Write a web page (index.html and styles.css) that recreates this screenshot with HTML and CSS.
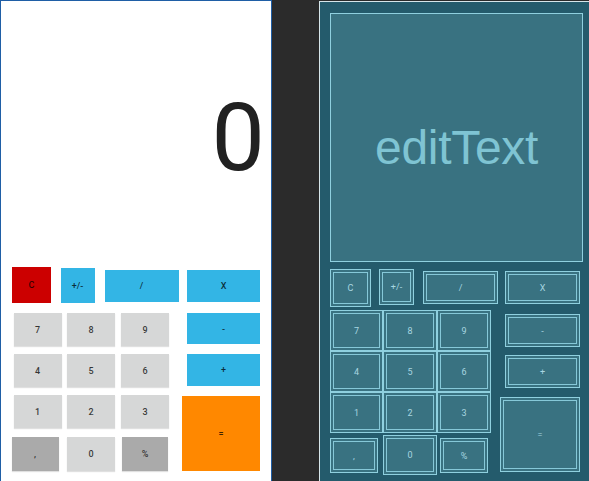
FILE: index.html
```html
<!DOCTYPE html>
<html>
<head>
<meta charset="utf-8">
<link rel="stylesheet" href="styles.css">
</head>
<body>
<div class="screen">
  <div class="panel design">
    <div class="edit"><span class="value">0</span></div>
    <div class="keypad">
      <div class="leftcol">
        <div class="row r1">
          <div class="btn b-c"><div class="face red">C</div></div>
          <div class="btn b-pm"><div class="face blue">+/-</div></div>
          <div class="btn b-div"><div class="face blue">/</div></div>
        </div>
        <div class="row digits">
          <div class="btn dg d1"><div class="face gray">7</div></div>
          <div class="btn dg"><div class="face gray">8</div></div>
          <div class="btn dg"><div class="face gray">9</div></div>
        </div>
        <div class="row digits">
          <div class="btn dg d1"><div class="face gray">4</div></div>
          <div class="btn dg"><div class="face gray">5</div></div>
          <div class="btn dg"><div class="face gray">6</div></div>
        </div>
        <div class="row digits">
          <div class="btn dg d1"><div class="face gray">1</div></div>
          <div class="btn dg"><div class="face gray">2</div></div>
          <div class="btn dg"><div class="face gray">3</div></div>
        </div>
        <div class="row r5">
          <div class="btn b-comma"><div class="face dark">,</div></div>
          <div class="btn b-zero"><div class="face gray">0</div></div>
          <div class="btn b-pct"><div class="face dark">%</div></div>
        </div>
      </div>
      <div class="rightcol">
        <div class="btn b-x"><div class="face blue">X</div></div>
        <div class="btn b-minus"><div class="face blue">-</div></div>
        <div class="btn b-plus"><div class="face blue">+</div></div>
        <div class="btn b-eq"><div class="face orange">=</div></div>
      </div>
    </div>
  </div>

  <div class="panel blueprint">
    <div class="edit"><span class="hint">editText</span></div>
    <div class="keypad">
      <div class="leftcol">
        <div class="row r1">
          <div class="btn b-c"><div class="face">C</div></div>
          <div class="btn b-pm"><div class="face">+/-</div></div>
          <div class="btn b-div"><div class="face">/</div></div>
        </div>
        <div class="row digits">
          <div class="btn dg d1"><div class="face">7</div></div>
          <div class="btn dg"><div class="face">8</div></div>
          <div class="btn dg"><div class="face">9</div></div>
        </div>
        <div class="row digits">
          <div class="btn dg d1"><div class="face">4</div></div>
          <div class="btn dg"><div class="face">5</div></div>
          <div class="btn dg"><div class="face">6</div></div>
        </div>
        <div class="row digits">
          <div class="btn dg d1"><div class="face">1</div></div>
          <div class="btn dg"><div class="face">2</div></div>
          <div class="btn dg"><div class="face">3</div></div>
        </div>
        <div class="row r5">
          <div class="btn b-comma"><div class="face">,</div></div>
          <div class="btn b-zero"><div class="face">0</div></div>
          <div class="btn b-pct"><div class="face">%</div></div>
        </div>
      </div>
      <div class="rightcol">
        <div class="btn b-x"><div class="face">X</div></div>
        <div class="btn b-minus"><div class="face">-</div></div>
        <div class="btn b-plus"><div class="face">+</div></div>
        <div class="btn b-eq"><div class="face">=</div></div>
      </div>
    </div>
  </div>
</div>
</body>
</html>
```

FILE: styles.css
```css
* { box-sizing: border-box; }
html, body {
  margin: 0;
  padding: 0;
  width: 589px;
  height: 481px;
  overflow: hidden;
  background: #2b2b2b;
  font-family: Roboto, "Liberation Sans", sans-serif;
}
.screen {
  display: flex;
  gap: 47px;
  align-items: flex-start;
}
.panel {
  flex: 0 0 272px;
  width: 272px;
  height: 500px;
}
.design {
  background: #ffffff;
  border: 1px solid #1f5ea6;
}
.blueprint {
  background: #245b6c;
  border-left: 1px solid #d6e6ea;
  border-top: 1px solid #d6e6ea;
  margin-top: 1px;
}

/* edit area */
.edit {
  margin: 11px 0 0 10px;
  width: 253px;
  height: 249px;
  display: flex;
  align-items: center;
}
.design .edit {
  justify-content: flex-end;
}
.value {
  font-family: Roboto, sans-serif;
  font-size: 95px;
  line-height: 1;
  color: #212121;
  margin-right: -1px;
  margin-top: 1px;
}
.blueprint .edit {
  justify-content: center;
  background: #397281;
  border: 1px solid #8fd0df;
  padding-top: 20px;
}
.hint {
  font-family: "Liberation Sans", Arial, sans-serif;
  font-size: 48px;
  color: #7fc4d3;
  letter-spacing: -0.3px;
}

/* keypad */
.keypad {
  display: flex;
  margin: 7px 0 0 10px;
}
.leftcol {
  width: 161px;
  display: flex;
  flex-direction: column;
}
.row {
  display: flex;
  height: 41px;
  align-items: flex-start;
}
.rightcol {
  margin-left: 9px;
  width: 80px;
  display: flex;
  flex-direction: column;
  align-items: flex-start;
}

.btn {
  display: flex;
  justify-content: center;
  align-items: flex-start;
  flex: none;
}
.face {
  display: flex;
  align-items: center;
  justify-content: center;
  font-size: 9px;
  font-weight: 500;
  color: rgba(0, 0, 0, 0.75);
}

.b-c { width: 41px; height: 38px; }
.b-pm { width: 35px; height: 36px; margin-left: 8px; }
.b-div { width: 75px; height: 33px; margin-left: 9px; margin-top: 2px; }
.dg { width: 54px; height: 41px; align-items: center; }
.dg.d1 { width: 53px; }
.r5 { height: 42px; }
.b-comma { width: 48px; height: 35px; margin-top: 5px; }
.b-zero { width: 54px; height: 40px; margin-left: 5px; margin-top: 2px; align-items: center; }
.b-pct { width: 48px; height: 35px; margin-left: 3px; margin-top: 5px; }
.b-x { width: 75px; height: 33px; margin-left: 5px; margin-top: 2px; }
.b-minus { width: 75px; height: 33px; margin-left: 5px; margin-top: 10px; }
.b-plus { width: 75px; height: 33px; margin-left: 5px; margin-top: 8px; }
.b-eq { width: 80px; height: 75px; margin-top: 9px; }

/* design faces */
.design .b-c .face { width: 39px; height: 36px; margin-top: -1px; }
.design .b-pm .face { width: 34px; height: 35px; }
.design .b-div .face { width: 74px; height: 32px; }
.design .dg .face { width: 48px; height: 33px; }
.design .b-comma .face { width: 47px; height: 34px; }
.design .b-zero .face { width: 48px; height: 34px; }
.design .b-pct .face { width: 46px; height: 34px; }
.design .b-x .face { width: 73px; height: 32px; }
.design .b-minus .face { width: 73px; height: 31px; }
.design .b-plus .face { width: 73px; height: 32px; }
.design .b-eq .face { width: 78px; height: 75px; }

.red { background: #cc0000; }
.blue { background: #33b5e5; }
.gray { background: #d6d7d7; box-shadow: 0 1px 1px rgba(0,0,0,0.12); }
.dark { background: #aaaaaa; box-shadow: 0 1px 1px rgba(0,0,0,0.12); }
.orange { background: #ff8800; }

/* blueprint buttons */
.blueprint .btn {
  background: #397281;
  border: 1px solid #8fd0df;
  padding: 2px;
  align-items: stretch;
  justify-content: stretch;
}
.blueprint .face {
  flex: 1;
  border: 1px solid #86c8d8;
  color: #a8d6e0;
  font-weight: 400;
  font-size: 9px;
}
```
